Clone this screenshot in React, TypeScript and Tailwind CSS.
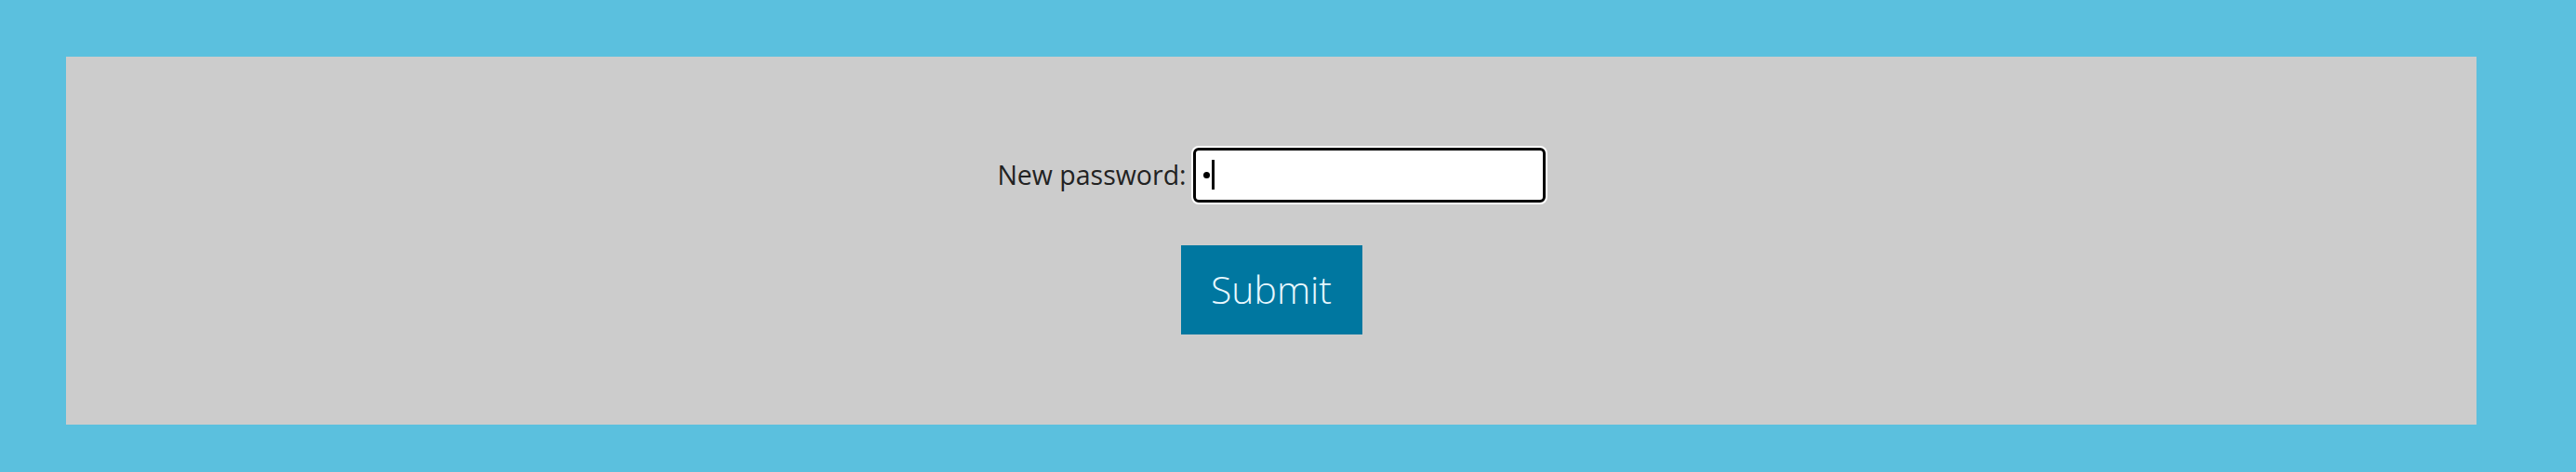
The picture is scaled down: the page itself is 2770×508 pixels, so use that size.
export default function App() {
  return (
    <div
      className="w-full h-[508px] bg-[#5bc0de] pt-[61px] pl-[71px] pr-[107px] pb-[51px]"
      style={{ fontFamily: '"Open Sans", "Liberation Sans", sans-serif' }}
    >
      <div className="h-full bg-[#cccccc] flex flex-col items-center justify-center gap-[46px]">
        <div className="flex items-center gap-[7px]">
          <label className="text-[28.5px] leading-none text-[#222222]">
            New password:
          </label>
          <div className="w-[379px] h-[59px] rounded-[6px] border-[3px] border-black bg-white ring-2 ring-white flex items-center pl-[8px]">
            <span className="w-[7px] h-[7px] rounded-full bg-black"></span>
            <span className="ml-[2px] w-[3px] h-[32px] bg-black"></span>
          </div>
        </div>
        <button className="w-[195px] h-[96px] bg-[#0077a0] text-[41px] font-light text-[#e8f8ff] leading-none">
          Submit
        </button>
      </div>
    </div>
  );
}
